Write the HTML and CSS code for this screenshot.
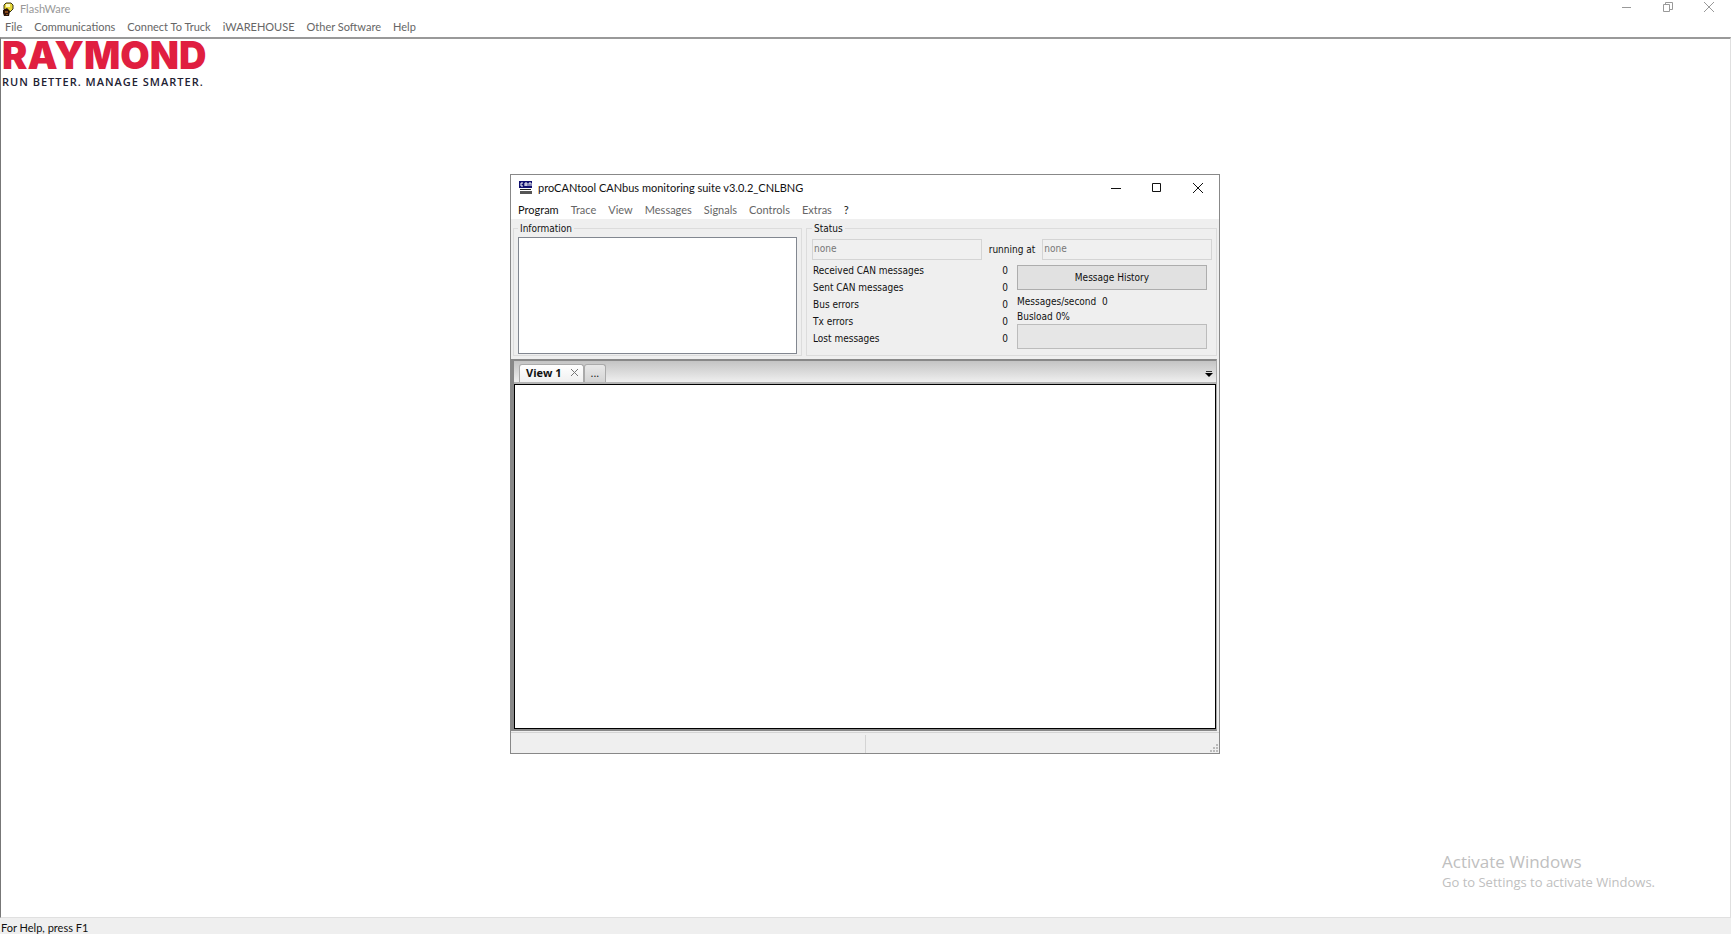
FILE: index.html
```
<!DOCTYPE html>
<html lang="en">
<head>
    <meta charset="utf-8">
    <title>FlashWare</title>
    <link rel="stylesheet" href="styles.css">
</head>
<body>
    <header class="titlebar">
        <svg class="app-icon" viewBox="0 0 12 14" width="12" height="14">
            <path d="M4 1h5l2 2v4l-3 3H5L2 7V3z" fill="#e8d838" stroke="#3a3614"/>
            <path d="M4 2h4v3H4z" fill="#fffbc0"/>
            <path d="M1 8l4-2 3 3-1 5H2l-1-3z" fill="#2a1408"/>
            <path d="M3 9h3v2H3zM4 12h2v1H4z" fill="#8a4a1c"/>
        </svg>
        <h1>FlashWare</h1>
        <div class="window-buttons inactive">
            <button aria-label="Minimize"><svg width="12" height="12"><path d="M1 6.500h9" stroke="currentColor"/></svg></button>
            <button aria-label="Restore"><svg width="12" height="12"><path d="M1.500 3.500h6v7h-6zM3.500 3V1.500h7v7H8" fill="none" stroke="currentColor"/></svg></button>
            <button aria-label="Close"><svg width="12" height="12"><path d="M1 1l10 10M11 1L1 11" stroke="currentColor"/></svg></button>
        </div>
    </header>

    <nav class="menu main-menu">
        <button>File</button>
        <button>Communications</button>
        <button>Connect To Truck</button>
        <button>iWAREHOUSE</button>
        <button>Other Software</button>
        <button>Help</button>
    </nav>

    <main class="workspace">
        <div class="logo">
            <div class="logo-name">RAYMOND</div>
            <div class="logo-slogan">RUN BETTER. MANAGE SMARTER.</div>
        </div>

        <section class="dialog">
            <header class="dialog-title">
                <svg class="dialog-icon" viewBox="0 0 14 14" width="14" height="14">
                    <path d="M0 0h13v7H0z" fill="#101070"/>
                    <path d="M4 2H2v3h2M6 5V2h2v3M6 4h2M10 5V2h2v3" fill="none" stroke="#fff"/>
                    <path d="M1 8h11v1H1z" fill="#222"/>
                    <path d="M1 10h12v3H1z" fill="#555"/>
                </svg>
                <h2>proCANtool CANbus monitoring suite v3.0.2_CNLBNG</h2>
                <div class="window-buttons">
                    <button aria-label="Minimize"><svg width="12" height="12"><path d="M1 6.500h10" stroke="currentColor"/></svg></button>
                    <button aria-label="Maximize"><svg width="12" height="12"><path d="M1.500 1.500h8v8h-8z" fill="none" stroke="currentColor"/></svg></button>
                    <button aria-label="Close"><svg width="12" height="12"><path d="M1 1l10 10M11 1L1 11" stroke="currentColor"/></svg></button>
                </div>
            </header>

            <nav class="menu dialog-menu">
                <button class="enabled">Program</button>
                <button>Trace</button>
                <button>View</button>
                <button>Messages</button>
                <button>Signals</button>
                <button>Controls</button>
                <button>Extras</button>
                <button class="enabled">?</button>
            </nav>

            <div class="panels">
                <fieldset class="information">
                    <legend>Information</legend>
                    <textarea aria-label="Information" readonly></textarea>
                </fieldset>

                <fieldset class="status">
                    <legend>Status</legend>
                    <div class="connection">
                        <input id="device" type="text" value="none" aria-label="Device" disabled>
                        <label for="speed">running at</label>
                        <input id="speed" type="text" value="none" disabled>
                    </div>
                    <div class="stats">
                        <table class="counters">
                            <tr><th>Received CAN messages</th><td>0</td></tr>
                            <tr><th>Sent CAN messages</th><td>0</td></tr>
                            <tr><th>Bus errors</th><td>0</td></tr>
                            <tr><th>Tx errors</th><td>0</td></tr>
                            <tr><th>Lost messages</th><td>0</td></tr>
                        </table>
                        <div class="load">
                            <button class="history">Message History</button>
                            <div class="rate">Messages/second&nbsp; 0</div>
                            <div class="busload">Busload 0%</div>
                            <div class="meter"></div>
                        </div>
                    </div>
                </fieldset>
            </div>

            <div class="notebook">
                <div class="tabs">
                    <button class="tab active">View 1
                        <svg width="9" height="9"><path d="M1 1l7 7M8 1L1 8" stroke="#777"/></svg>
                    </button>
                    <button class="tab">...</button>
                    <button class="tab-list" aria-label="Tab list">
                        <svg width="8" height="6"><path d="M1 0h6v1H1z" fill="#333"/><path d="M0 2h8L4 6z"/></svg>
                    </button>
                </div>
                <div class="view"></div>
            </div>

            <footer class="dialog-status">
                <div></div>
                <div>
                    <svg class="grip" width="8" height="8" fill="#bbb"><path d="M6 0h2v2H6zM3 3h2v2H3zM6 3h2v2H6zM0 6h2v2H0zM3 6h2v2H3zM6 6h2v2H6z"/></svg>
                </div>
            </footer>
        </section>

        <div class="watermark">
            <div class="watermark-title">Activate Windows</div>
            <div>Go to Settings to activate Windows.</div>
        </div>
    </main>

    <footer class="statusbar">For Help, press F1</footer>
</body>
</html>
```
FILE: styles.css
```
* {
    box-sizing: border-box;
}

body {
    margin: 0;
    height: 100vh;
    display: flex;
    flex-direction: column;
    overflow: hidden;
    background: #fff;
    color: #111;
    font-family: Lato, "Open Sans", sans-serif;
    font-size: 11px;
    line-height: 16px;
}

h1, h2 {
    margin: 0;
    flex: 1;
    font-size: 11px;
    font-weight: normal;
}

button {
    padding: 0;
    border: none;
    background: none;
    color: inherit;
    font: inherit;
}

svg {
    display: block;
}

.titlebar {
    display: flex;
    align-items: center;
    height: 17px;
    padding: 0 2px;
    gap: 6px;
    color: #999;
}

.window-buttons {
    display: flex;
}

.window-buttons button {
    display: flex;
    align-items: center;
    justify-content: center;
    width: 41px;
    height: 14px;
}

.window-buttons.inactive {
    align-self: flex-start;
}

.menu {
    display: flex;
    gap: 12px;
    color: #666;
}

.main-menu {
    height: 20px;
    padding: 2px 5px;
}

.menu .enabled {
    color: #111;
}

.workspace {
    position: relative;
    flex: 1;
    border: 1px solid #e0e0e0;
    border-top: 2px solid #999;
    border-left-color: #777;
}

.logo {
    padding: 0 1px;
}

.logo-name {
    color: #e01f40;
    font-family: Inter, sans-serif;
    font-size: 38px;
    font-weight: 900;
    line-height: 32px;
}

.logo-slogan {
    color: #223;
    font-family: "Open Sans", sans-serif;
    font-size: 11px;
    font-weight: 600;
    letter-spacing: 1px;
    line-height: 22px;
}

/* floating window */
.dialog {
    position: absolute;
    top: 135px;
    left: 509px;
    display: flex;
    flex-direction: column;
    width: 710px;
    height: 580px;
    border: 1px solid #888;
    background: #efefef;
}

.dialog-title {
    display: flex;
    align-items: center;
    height: 26px;
    padding: 0 1px 0 8px;
    gap: 5px;
    background: #fff;
}

.dialog-menu {
    height: 18px;
    padding-left: 7px;
    background: #fff;
}

.panels {
    display: flex;
    gap: 4px;
    padding: 2px 2px 3px;
    height: 140px;
    font-family: "DejaVu Sans Condensed", "Open Sans", sans-serif;
    font-size: 10px;
}

fieldset {
    margin: 0;
    min-width: 0;
    border: 1px solid #dcdcdc;
}

legend {
    padding: 0 2px;
    line-height: 15px;
}

.information {
    width: 289px;
    padding: 1px 4px 3px;
}

.information textarea {
    display: block;
    width: 100%;
    height: 117px;
    border: 1px solid #828790;
    background: #fff;
    resize: none;
}

.status {
    flex: 1;
    padding: 3px 4px 0 5px;
}

.connection {
    display: flex;
    align-items: center;
    gap: 7px;
}

.connection input {
    flex: 1;
    min-width: 0;
    height: 21px;
    padding: 0 1px 3px;
    border: 1px solid #d4d4d4;
    background: #f0f0f0;
    color: #777;
    font: inherit;
}

.stats {
    display: flex;
    align-items: flex-start;
    gap: 8px;
    padding-right: 5px;
}

.counters {
    width: 197px;
    margin-top: 2px;
    border-collapse: collapse;
}

.counters th,
.counters td {
    height: 17px;
    padding: 0 1px;
    font-weight: normal;
    line-height: 17px;
    text-align: left;
}

.counters td {
    text-align: right;
}

.load {
    flex: 1;
    padding-top: 5px;
}

.history {
    display: block;
    width: 100%;
    height: 25px;
    border: 1px solid #adadad;
    background: #e1e1e1;
}

.rate {
    margin-top: 4px;
}

.busload {
    line-height: 14px;
}

.meter {
    height: 25px;
    border: 1px solid #bcbcbc;
    background: #e6e6e6;
}

.notebook {
    flex: 1;
    display: flex;
    flex-direction: column;
    margin-right: 2px;
    border: 2px solid #888;
    border-left-width: 3px;
    border-right: 1px solid #aaa;
}

.tabs {
    display: flex;
    align-items: flex-end;
    height: 23px;
    padding: 0 3px 0 5px;
    border-bottom: 2px solid #b4b4b4;
    background: linear-gradient(#c4c4c4, #efefef);
    font-family: "Open Sans", sans-serif;
    font-size: 11px;
}

.tab {
    height: 18px;
    padding: 0 6px 2px;
    border: 1px solid #aaa;
    border-bottom: none;
    border-radius: 3px 3px 0 0;
    background: linear-gradient(#e8e8e8, #d4d4d4);
    line-height: 15px;
}

.tab.active {
    display: flex;
    align-items: center;
    gap: 8px;
    padding: 0 4px 2px 6px;
    background: linear-gradient(#fff, #f0f0f0);
    font-weight: bold;
}

.tab-list {
    margin: 0 0 5px auto;
}

.view {
    flex: 1;
    border: 1px solid #000;
    background: #fff;
}

.dialog-status {
    display: flex;
    height: 21px;
    margin-top: 1px;
    padding-top: 2px;
    border-top: 1px solid #d4d4d4;
}

.dialog-status div {
    flex: 1;
    display: flex;
    align-items: flex-end;
    justify-content: flex-end;
    padding: 1px;
}

.dialog-status div + div {
    border-left: 1px solid #d4d4d4;
}

.watermark {
    position: absolute;
    right: 75px;
    bottom: 26px;
    color: #c0c0c0;
    font-family: "Open Sans", sans-serif;
    font-size: 13px;
    line-height: 18px;
}

.watermark-title {
    font-size: 17px;
    line-height: 22px;
}

.statusbar {
    height: 16px;
    padding-left: 1px;
    background: #efefef;
    line-height: 20px;
}
```
